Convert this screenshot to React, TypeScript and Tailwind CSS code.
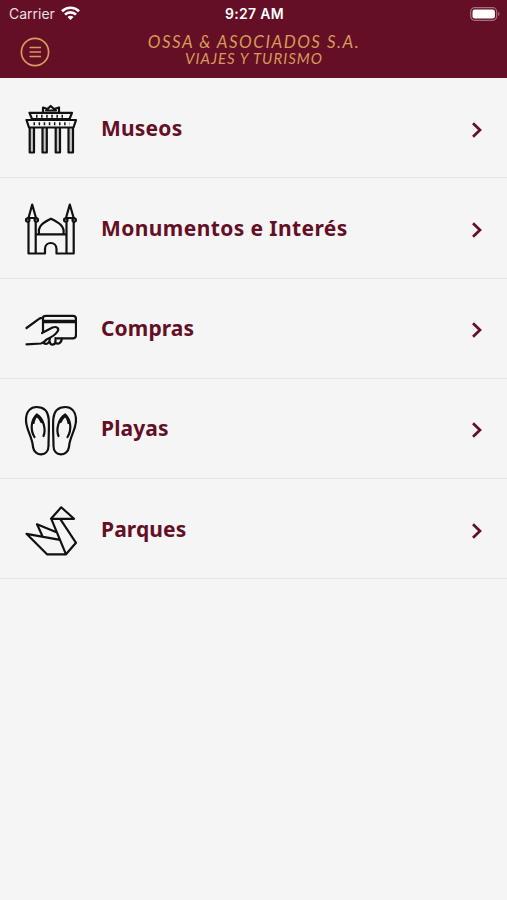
import React from 'react';

interface Category {
    label: string;
    tracking: string;
    icon: React.ReactNode;
}

const categories: Category[] = [
    {
        label: 'Museos',
        tracking: 'tracking-[0.2px]',
        icon: (
            <>
                <path d="M14.7 33V57.5H19V33M27.5 33V57.5H31.8V33M40.7 33V57.5H45V33M53.5 33V57.5H58V33" fill="#c8c8c8" />
                <path d="M14.5 17.8H57L54.5 24H17ZM11.5 25H61L58.5 32.5H14Z" />
                <path d="M28 17V12.5L32.5 14L35.7 11L39 14L44 12.5V17M31 15.5H41" />
                <path d="M21 21.3H51.5M18.5 28.8H54.5" strokeWidth="3" strokeDasharray="1.5 3.6" strokeLinecap="butt" />
            </>
        ),
    },
    {
        label: 'Monumentos e Interés',
        tracking: 'tracking-[0.4px]',
        icon: (
            <>
                <path d="M13.5 27V58.5H30V54C30 46 41.5 46 41.5 54V58.5H58.7V27M20.7 27V58.5M51.5 27V58.5M21 39.3H51" />
                <path d="M24 39C22.5 31 29 27 36 23.7C43 27 50 31 48.5 39" />
                <path d="M13.5 23L17.2 9.5L21 23ZM51 23L54.8 9.5L58.7 23Z" />
                <path d="M13 23H21.5M51 23H59" />
                <circle cx="12.7" cy="25" r="1.7" />
                <circle cx="21.3" cy="25" r="1.7" />
                <circle cx="50.8" cy="25" r="1.7" />
                <circle cx="59.2" cy="25" r="1.7" />
            </>
        ),
    },
    {
        label: 'Compras',
        tracking: 'tracking-[0.1px]',
        icon: (
            <>
                <path d="M11.5 32L24 22.8C25 22 26 21.8 27.5 21.8" />
                <path d="M28 35.5V22Q28 19.8 31 19.8H58Q61 19.8 61 23V39Q61 42.3 58 42.3H42" />
                <path d="M28 25.5H61" strokeWidth="3.6" strokeLinecap="butt" />
                <path d="M27 37L37.5 31.5C42 30 44.5 32.5 42.5 35.5C40 39.5 35 42 31.5 43.5C29.5 46 28 47 26 47.5L11.5 48.3" />
                <path d="M28.5 47C31.5 49 34.5 47.5 35 42.5M35 46C35 50 40.5 49.5 40.5 45V42M40.5 47C44 49 46.5 46 47 42.5" />
            </>
        ),
    },
    {
        label: 'Playas',
        tracking: 'tracking-[0.1px]',
        icon: (
            <>
                <path d="M18 51C17.5 41 11 34 11 24C11 15 16 11 21.5 11C29 11 33 15 33.7 23C34.3 32 33.5 42 33.5 50C33.5 61 19.5 61 18 51Z" />
                <path d="M54 51C54.5 41 61 34 61 24C61 15 56 11 50.5 11C43 11 39 15 38.3 23C37.7 32 38.5 42 38.5 50C38.5 61 52.5 61 54 51Z" />
                <path d="M19.5 41C15 34 16 24 21.8 18.5C29 23 31 34 28.5 40M52.5 41C57 34 56 24 50.2 18.5C43 23 41 34 43.5 40" />
                <path d="M18.5 27Q19.5 21.5 21.8 20Q25 22 26.5 26M53.5 27Q52.5 21.5 50.2 20Q47 22 45.5 26" />
            </>
        ),
    },
    {
        label: 'Parques',
        tracking: 'tracking-[0.1px]',
        icon: (
            <path d="M36 22.8L46.2 11.3L59 22.8ZM36.5 23.3L51 58.3M45.5 23.3L61 46.8L51 58.3H32L11.5 37.8L45 43.8M27.5 40.3L22 28.3L41.5 36.3" />
        ),
    },
];

const StatusBar = () => (
    <div className="grid h-[27px] grid-cols-3 items-center pl-[9px] pr-[7px] font-['Inter','Liberation_Sans',sans-serif] text-white">
        <div className="flex items-center gap-[6px]">
            <span className="text-[14px] text-[#eadfe2]">Carrier</span>
            <svg className="h-[15px] w-[19px]" viewBox="0 0 19 15" fill="none" stroke="currentColor" strokeWidth="2.7">
                <path d="M1 5.2C5.7.6 13.3.6 18 5.2M4 8.6C7 5.7 12 5.7 15 8.6" />
                <path d="M9.5 14L6.5 11Q9.5 8.5 12.5 11Z" fill="currentColor" stroke="none" />
            </svg>
        </div>
        <span className="text-center text-[14px] font-semibold tracking-[0.3px]">9:27 AM</span>
        <svg className="h-[14px] w-[30px] justify-self-end" viewBox="0 0 30 14">
            <rect x=".7" y=".7" width="26" height="12.6" rx="4" fill="none" stroke="#a56f7e" strokeWidth="1.2" />
            <rect x="2.5" y="2.5" width="22.4" height="9" rx="2.3" fill="white" />
            <path d="M28.2 4.8Q31 7 28.2 9.2Z" fill="#a56f7e" />
        </svg>
    </div>
);

const Header = () => (
    <header className="h-[78px] bg-[#640f25]">
        <StatusBar />
        <div className="grid h-[51px] grid-cols-[50px_1fr_50px] pl-5 pr-[19px]">
            <button className="mt-[10px] h-[30px] w-[30px] text-[#d79a59]" aria-label="Menú">
                <svg viewBox="0 0 30 30" fill="none" stroke="currentColor" strokeWidth="1.7">
                    <circle cx="15" cy="15" r="13.6" />
                    <path d="M9.5 10.5H21M9.5 15H21M9.5 19.5H21" />
                </svg>
            </button>
            <div className="flex flex-col items-center whitespace-nowrap pt-[5px] font-['Lato',sans-serif] italic text-[#d79a59]">
                <span className="text-[17px] leading-[19px] tracking-[1.5px]">OSSA &amp; ASOCIADOS S.A.</span>
                <span className="text-[15px] leading-[15px] tracking-[1px]">VIAJES Y TURISMO</span>
            </div>
        </div>
    </header>
);

const CategoryRow: React.FC<{ category: Category }> = ({ category }) => (
    <li className="flex h-[100.25px] items-center border-b border-[#e6e6e6] pl-[23px] pr-[25px]">
        <svg
            className="mt-[5px] h-[54px] w-[54px] shrink-0 text-[#111]"
            viewBox="8 8 54 54"
            fill="none"
            stroke="currentColor"
            strokeWidth="2.2"
            strokeLinecap="round"
            strokeLinejoin="round"
        >
            {category.icon}
        </svg>
        <span className={`ml-6 grow whitespace-nowrap font-['Noto_Sans',sans-serif] text-[21px] font-bold leading-7 text-[#640f25] ${category.tracking}`}>
            {category.label}
        </span>
        <svg className="mt-1 h-4 w-[11px] text-[#640f25]" viewBox="0 0 11 16" fill="none" stroke="currentColor" strokeWidth="2.7">
            <path d="M2 1.2L9 8L2 14.8" />
        </svg>
    </li>
);

const App = () => (
    <div className="min-h-screen bg-[#f5f5f5]">
        <Header />
        <ul>
            {categories.map((category) => (
                <CategoryRow key={category.label} category={category} />
            ))}
        </ul>
    </div>
);

export default App;
